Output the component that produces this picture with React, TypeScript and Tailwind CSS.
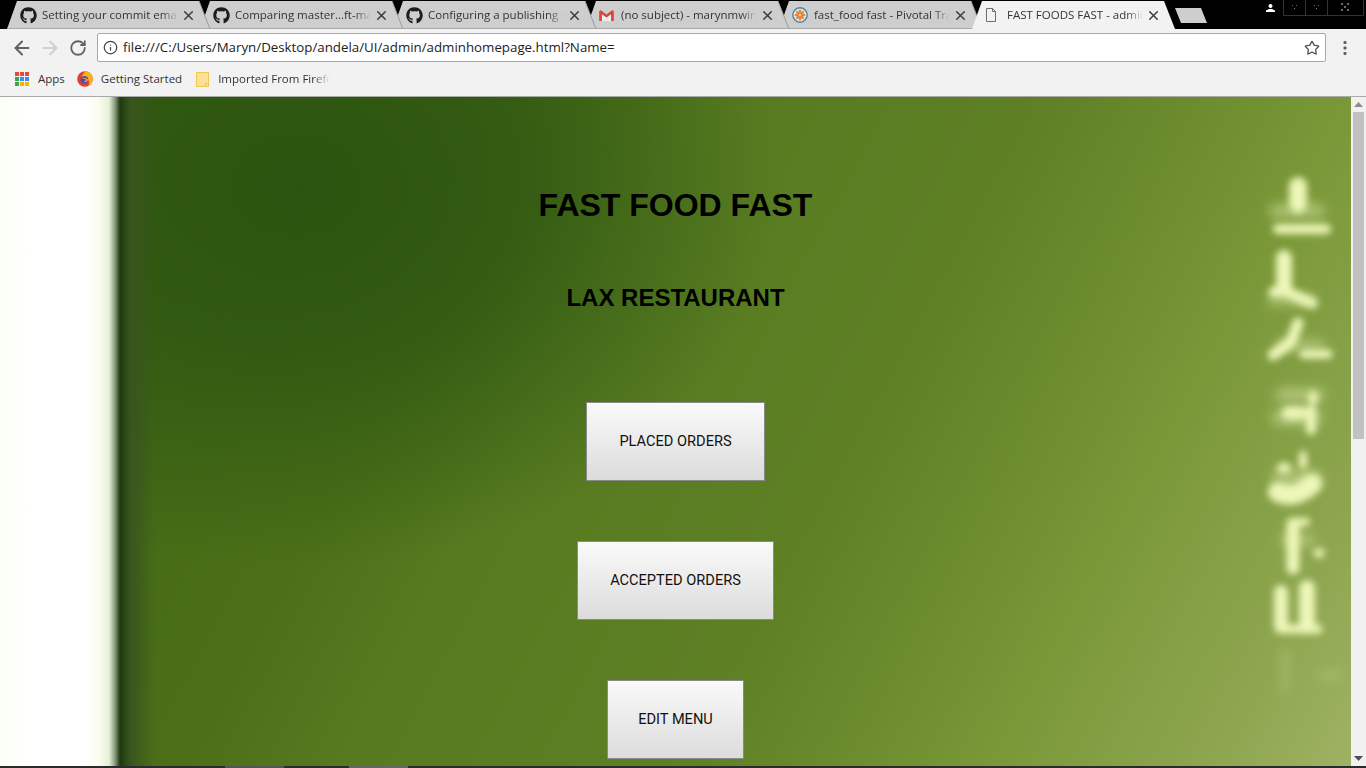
import { ArrowLeft, ArrowRight, RotateCw, Info, Star, X } from "lucide-react";
import { FaGithub } from "react-icons/fa";

const ui = "font-['Open_Sans','Noto_Sans',sans-serif]";

function Gmail() {
  return (
    <svg width="15" height="11" viewBox="0 0 16 12">
      <path d="M3 4.5 V12 H13 V4.5 L8 8.2 Z" fill="#eeeeee" />
      <path d="M0 1.5 V12 H3 V4.5 L8 8.2 L13 4.5 V12 H16 V1.5 L14.5 0 L8 4.8 L1.5 0 Z" fill="#d9483b" />
    </svg>
  );
}

function Pivotal() {
  return (
    <svg width="16" height="16" viewBox="0 0 16 16">
      <circle cx="8" cy="8" r="7.2" fill="#e9e9e9" stroke="#4b86a8" strokeWidth="1.4" />
      <g stroke="#e58a3c" strokeWidth="2.4" strokeLinecap="round">
        <path d="M8 3.8 V12.2" />
        <path d="M3.8 8 H12.2" />
        <path d="M5 5 L11 11" />
        <path d="M11 5 L5 11" />
      </g>
      <circle cx="8" cy="8" r="1" fill="#e9e9e9" />
    </svg>
  );
}

function Doc() {
  return (
    <svg width="12" height="14" viewBox="0 0 12 14" fill="none" stroke="#6e6e6e">
      <path d="M1.5 .5 H7.5 L10.5 3.5 V13.5 H1.5 Z" />
      <path d="M7.5 .5 V3.5 H10.5" />
    </svg>
  );
}

const tabs = [
  { title: "Setting your commit email", icon: <FaGithub size={17} color="#1d1d1d" /> },
  { title: "Comparing master...ft-master", icon: <FaGithub size={17} color="#1d1d1d" /> },
  { title: "Configuring a publishing source", icon: <FaGithub size={17} color="#1d1d1d" /> },
  { title: "(no subject) - marynmwiruki", icon: <Gmail /> },
  { title: "fast_food fast - Pivotal Tracker", icon: <Pivotal /> },
  { title: "FAST FOODS FAST - admin", icon: <Doc />, active: true },
];

function Tab({ title, icon, active, index }: { title: string; icon: React.ReactNode; active?: boolean; index: number }) {
  return (
    <div className="relative h-[28px] w-[193px] shrink-0" style={{ zIndex: active ? 20 : 10 - index }}>
      <svg className="absolute left-0 top-0 overflow-visible" width="203" height="28" viewBox="0 0 203 28">
        <path d="M0 28 L10 0 H192 L203 28 Z" fill={active ? "#f2f2f2" : "#cecece"} />
        {!active && <path d="M203 28 L192 0" stroke="#9c9c9c" strokeWidth="1" />}
        {!active && <path d="M0 27.5 H203" stroke="#a8a8a8" strokeWidth="1" />}
      </svg>
      <div className="relative flex h-full items-center">
        <div className="flex w-[35px] shrink-0 items-center justify-start pl-[13px]">{icon}</div>
        <div className={"w-[136px] overflow-hidden whitespace-nowrap text-[11.5px] text-[#333] [mask-image:linear-gradient(to_right,black_88%,transparent)] " + ui}>
          {title}
        </div>
        <X size={15} strokeWidth={2.4} color="#3c3c3c" className="ml-[3px] shrink-0" />
      </div>
    </div>
  );
}

function AppsGrid() {
  const c = ["#e8453c", "#e8453c", "#e8453c", "#34a853", "#4285f4", "#4285f4", "#34a853", "#f4b400", "#f4b400"];
  return (
    <div className="grid h-[14px] w-[14px] grid-cols-3 gap-[1px]">
      {c.map((col, i) => (
        <div key={i} className="h-[4px] w-[4px]" style={{ backgroundColor: col }} />
      ))}
    </div>
  );
}

function Firefox() {
  return (
    <svg width="16" height="16" viewBox="0 0 16 16">
      <circle cx="8" cy="8" r="7.8" fill="#e0402a" />
      <path d="M8 .3 A7.7 7.7 0 0 1 15.7 8 A7.7 7.7 0 0 1 11 15.1 C13 12.5 12.5 8.5 9 7 C7 6 5 6.5 4.5 5 C6 4 7 2 8 .3 Z" fill="#f9b11f" />
      <circle cx="7.4" cy="8.6" r="3.7" fill="#3a4fc4" />
      <path d="M4.8 7.2 C7 6.2 9.8 7 11.4 8.8 C10.4 11 8 11.6 6 10.6 C8 10.4 9 9.4 8.4 8.2 Z" fill="#f8932a" />
    </svg>
  );
}

function Folder() {
  return (
    <svg width="13" height="15" viewBox="0 0 13 15">
      <path d="M.5 .5 H12.5 V14.5 H.5 Z" fill="#fde293" stroke="#f0c556" />
      <path d="M9.5 14.5 V11.5 H12.5" fill="none" stroke="#f0c556" />
    </svg>
  );
}

function Dots() {
  return (
    <svg width="4" height="14" viewBox="0 0 4 14" fill="#5f5f5f">
      <rect x=".5" y="0" width="3" height="3" rx="1" />
      <rect x=".5" y="5.5" width="3" height="3" rx="1" />
      <rect x=".5" y="11" width="3" height="3" rx="1" />
    </svg>
  );
}

function WindowControls() {
  return (
    <svg className="absolute right-[2px] top-0" width="81" height="16" viewBox="0 0 81 16" fill="none">
      <path d="M.5 0 V15.5 H80.5 V0 M22.5 0 V15.5 M44.5 0 V15.5" stroke="#333" />
      <g fill="#6a6a6a">
        <rect x="9" y="5" width="1" height="1" />
        <rect x="13" y="5" width="1" height="1" />
        <rect x="11" y="8" width="1" height="1" fill="#888" />
        <rect x="31" y="5" width="1" height="1" />
        <rect x="35" y="5" width="1" height="1" />
        <rect x="33" y="8" width="1" height="1" fill="#888" />
        <rect x="58" y="3" width="2" height="2" />
        <rect x="64" y="3" width="2" height="2" />
        <rect x="61" y="6" width="2" height="2" />
        <rect x="58" y="9" width="2" height="2" />
        <rect x="64" y="9" width="2" height="2" />
      </g>
    </svg>
  );
}

function BlurredText() {
  return (
    <svg
      className="absolute right-0 top-0 h-full w-[101px]"
      viewBox="1250 97 101 669"
      preserveAspectRatio="none"
      fill="none"
      strokeLinecap="round"
    >
      <defs>
        <filter id="soft" x="-40%" y="-40%" width="180%" height="180%">
          <feGaussianBlur stdDeviation="3.6" />
        </filter>
        <filter id="softer" x="-40%" y="-40%" width="180%" height="180%">
          <feGaussianBlur stdDeviation="6" />
        </filter>
      </defs>
      <g filter="url(#softer)" stroke="#cfe09a" opacity="0.6">
        <path d="M1276 211 H1318" strokeWidth="14" />
        <path d="M1282 395 H1318 M1278 418 H1316" strokeWidth="14" />
        <path d="M1278 478 H1315" strokeWidth="14" />
        <path d="M1272 300 H1310 M1280 345 H1320 M1285 540 H1310" strokeWidth="10" />
        <path d="M1285 650 V690 M1320 675 H1340" strokeWidth="4" />
      </g>
      <g filter="url(#soft)" stroke="#edf7b8">
        <path d="M1298 186 V204" strokeWidth="18" />
        <path d="M1278 229 H1326" strokeWidth="10" />
        <path d="M1284 258 V288" strokeWidth="16" />
        <path d="M1274 292 L1286 292 L1312 303" strokeWidth="11" />
        <path d="M1298 323 L1291 342 L1273 355" strokeWidth="11" />
        <path d="M1304 354 H1328" strokeWidth="9" />
        <path d="M1313 396 V400" strokeWidth="9" />
        <path d="M1288 413 H1300" strokeWidth="13" />
        <path d="M1311 410 V430" strokeWidth="10" />
        <path d="M1282 468 H1286" strokeWidth="10" />
        <path d="M1303 455 V465" strokeWidth="8" />
        <path d="M1278 492 Q1295 500 1312 484" strokeWidth="20" />
        <path d="M1293 524 V568" strokeWidth="13" />
        <path d="M1293 522 H1306" strokeWidth="8" />
        <path d="M1318 553 H1320" strokeWidth="9" />
        <path d="M1281 592 V626" strokeWidth="14" />
        <path d="M1307 588 V626" strokeWidth="16" />
        <path d="M1280 629 H1318" strokeWidth="9" />
      </g>
    </svg>
  );
}

function MenuButton({ label, w }: { label: string; w: string }) {
  return (
    <button
      className={
        "h-[79px] shrink-0 border border-[#8a8a8a] bg-gradient-to-b from-[#fafafa] to-[#dcdcdc] text-[14.6px] text-[#111] font-['Roboto',sans-serif] " +
        w
      }
    >
      {label}
    </button>
  );
}

export default function App() {
  return (
    <div className="flex h-screen w-full flex-col overflow-hidden bg-black">
      {/* tab strip */}
      <div className="relative flex h-[29px] shrink-0 items-start bg-black pl-[7px] pt-[1px]">
        {tabs.map((t, i) => (
          <Tab key={t.title} index={i} title={t.title} icon={t.icon} active={t.active} />
        ))}
        <svg className="absolute left-[1175px] top-[8px]" width="32" height="15" viewBox="0 0 32 15">
          <path d="M0 0 H26 L32 15 H6 Z" fill="#cecece" />
        </svg>
        <WindowControls />
        <svg className="absolute left-[1266px] top-[4px]" width="9" height="8" viewBox="0 0 9 8" fill="#fff">
          <circle cx="4.5" cy="2" r="2" />
          <path d="M0 8 V6.6 L3 5 H6 L9 6.6 V8 Z" />
        </svg>
      </div>

      {/* toolbar */}
      <div className="relative z-20 flex h-[33px] shrink-0 items-center bg-[#f2f2f2] pt-[4px]">
        <div className="flex w-[97px] shrink-0 items-center pl-[11px]">
          <ArrowLeft size={22} color="#5f6368" strokeWidth={2.2} />
          <ArrowRight size={22} color="#cfcfcf" strokeWidth={2.2} className="ml-[6px]" />
          <RotateCw size={18} color="#5f6368" strokeWidth={2.4} className="ml-[8px]" />
        </div>
        <div className="flex h-[29px] w-[1229px] shrink-0 items-center rounded-[2px] border border-[#a9a9a9] bg-white pl-[5px] pr-[5px]">
          <Info size={15} color="#444" strokeWidth={2} />
          <span className={"ml-[5px] flex-1 whitespace-nowrap text-[13.3px] text-[#222] " + ui}>
            file:///C:/Users/Maryn/Desktop/andela/UI/admin/adminhomepage.html?Name=
          </span>
          <Star size={16} color="#555" strokeWidth={2} />
        </div>
        <div className="ml-[17px]">
          <Dots />
        </div>
      </div>

      {/* bookmarks */}
      <div className={"flex h-[35px] shrink-0 items-center border-b border-[#a9a9a9] bg-[#f2f2f2] pl-[15px] text-[11.5px] text-[#333] " + ui}>
        <AppsGrid />
        <span className="ml-[9px]">Apps</span>
        <div className="ml-[12px]">
          <Firefox />
        </div>
        <span className="ml-[8px]">Getting Started</span>
        <div className="ml-[14px]">
          <Folder />
        </div>
        <span className="ml-[9px] w-[112px] overflow-hidden whitespace-nowrap [mask-image:linear-gradient(to_right,black_85%,transparent)]">
          Imported From Firefox
        </span>
      </div>

      {/* page */}
      <div className="flex min-h-0 flex-1">
        <div className="relative flex min-w-0 flex-1 flex-col items-center overflow-hidden bg-[linear-gradient(to_right,#fbfff6_0px,#ffffff_30px,#ffffff_85px,#fbfdf0_98px,#e6efd8_109px,#8a9a80_115px,#1e3a0c_120px,#38551f_130px,rgba(45,85,17,0)_155px),radial-gradient(ellipse_480px_380px_at_300px_90px,#2b5410_0%,rgba(43,84,16,0.75)_45%,rgba(43,84,16,0)_100%),linear-gradient(118deg,#3a6212_0%,#4c7018_32%,#567a20_41%,#5f8025_61.5%,#6f8f30_72.7%,#7a9838_79%,#8ea650_92%,#9fb264_100%)] pt-[90px]">
          <h1 className="text-[32px] font-bold leading-[37px] text-black font-['Liberation_Sans',sans-serif]">FAST FOOD FAST</h1>
          <h2 className="mt-[60px] text-[24px] font-bold leading-[28px] text-black font-['Liberation_Sans',sans-serif]">LAX RESTAURANT</h2>
          <div className="mt-[90px] flex flex-col items-center gap-[60px]">
            <MenuButton label="PLACED ORDERS" w="w-[179px]" />
            <MenuButton label="ACCEPTED ORDERS" w="w-[197px]" />
            <MenuButton label="EDIT MENU" w="w-[137px]" />
          </div>
          <BlurredText />
        </div>
        {/* scrollbar */}
        <div className="flex w-[15px] shrink-0 flex-col items-center bg-[#f1f1f1]">
          <svg className="mt-[5px]" width="9" height="5" viewBox="0 0 9 5" fill="#8c8c8c">
            <path d="M4.5 0 L9 5 H0 Z" />
          </svg>
          <div className="mt-[5px] h-[327px] w-[11px] bg-[#c1c1c1]" />
          <svg className="mb-[5px] mt-auto" width="9" height="5" viewBox="0 0 9 5" fill="#505050">
            <path d="M0 0 H9 L4.5 5 Z" />
          </svg>
        </div>
      </div>
      <div className="flex h-[2px] shrink-0 bg-[#2b2b2b]">
        <div className="ml-[225px] w-[59px] bg-[#555]" />
        <div className="ml-[65px] w-[59px] bg-[#666]" />
      </div>
    </div>
  );
}
